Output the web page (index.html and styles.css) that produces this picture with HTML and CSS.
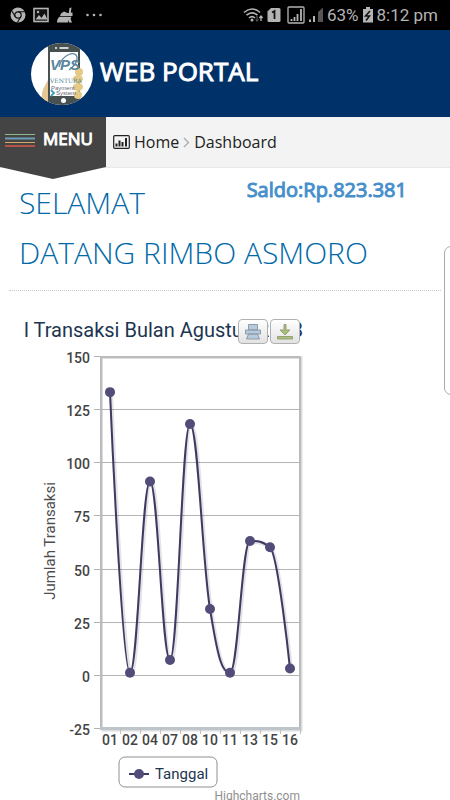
FILE: index.html
```html
<!DOCTYPE html>
<html lang="id">
  <head>
    <meta charset="UTF-8" />
    <meta name="viewport" content="width=device-width, initial-scale=1.0" />
    <title>Web Portal</title>
    <link rel="stylesheet" href="styles.css">
  </head>
  <body>
    <div class="status-bar">
      <div class="status-left">
        <svg width="16" height="16" viewBox="0 0 16 16">
          <circle cx="8" cy="8" r="7.5" fill="#b4b4b4" />
          <circle cx="8" cy="8" r="3.2" fill="#b4b4b4" stroke="#111" stroke-width="1.2" />
          <path d="M8 4.8H15M5.2 9.6L1.8 3.8M10.8 9.6L7.5 15.3" stroke="#111" stroke-width="1.1" />
        </svg>
        <svg width="16" height="16" viewBox="0 0 16 16">
          <rect x="1" y="1.5" width="14" height="13" fill="#111" stroke="#b4b4b4" stroke-width="1.6" />
          <path d="M2.5 12.5L6 8l2.5 3 3-4.5 3 6z" fill="#b4b4b4" />
          <circle cx="5" cy="5" r="1.2" fill="#b4b4b4" />
        </svg>
        <svg width="18" height="16" viewBox="0 0 18 16">
          <path d="M13.500 1l2-.5-1 7h-2zM5 6.500l3-2 3.500 1.500 5-.5V9H4zM3.500 9.800h12l-1 2 1.500 3.700h-3l-1-3v3H1c0-2 .5-4 2.500-5.700z" fill="#b4b4b4" />
        </svg>
        <svg class="dots" width="16" height="16" viewBox="0 0 16 16">
          <circle cx="1.500" cy="8" r="1.300" fill="#b4b4b4" />
          <circle cx="8" cy="8" r="1.300" fill="#b4b4b4" />
          <circle cx="14.500" cy="8" r="1.300" fill="#b4b4b4" />
        </svg>
      </div>
      <div class="status-right">
        <svg width="21" height="16" viewBox="0 0 21 16">
          <path d="M1 5.500q8-7 16 0M3.500 8.200q5.500-4.800 11 0M6 11q3-2.600 6 0" fill="none" stroke="#b4b4b4" stroke-width="1.600" />
          <circle cx="9" cy="13" r="1.500" fill="#b4b4b4" />
          <path d="M14 9v5M12.500 12.500L14 14.300l1.500-1.800" fill="none" stroke="#666" />
          <path d="M18 14V9M16.300 11L18 9l1.700 2" fill="none" stroke="#b4b4b4" stroke-width="1.300" />
        </svg>
        <svg width="14" height="16" viewBox="0 0 14 16">
          <path d="M4 1h8q1.500 0 1.500 1.500v11q0 1.500-1.500 1.500H2Q.5 15 .5 13.500V4.500z" fill="#b4b4b4" />
          <path d="M5 5.500L7.500 4v8" fill="none" stroke="#111" stroke-width="1.800" />
        </svg>
        <svg class="signal" width="18" height="18" viewBox="0 0 18 18">
          <rect x="1" y="1" width="16" height="16" rx="1" fill="none" stroke="#b4b4b4" stroke-width="1.300" />
          <path d="M4.500 15v-2M7.500 15v-4M10.500 15V8M14 15V3" stroke="#b4b4b4" stroke-width="1.800" />
        </svg>
        <svg width="16" height="16" viewBox="0 0 16 16">
          <path d="M10 5l5-4.500V15h-5z" fill="#555" />
          <path d="M2 15v-2.500M6 15V9" stroke="#b4b4b4" stroke-width="2" />
        </svg>
        <span class="battery-text">63%</span>
        <svg width="12" height="18" viewBox="0 0 12 18">
          <path d="M4 1h4v2h3v13.500H1V3h3z" fill="#b4b4b4" />
          <path d="M8 5L3.500 10h4L4 14.500" fill="none" stroke="#111" stroke-width="1.500" />
        </svg>
        <span class="clock">8:12 pm</span>
      </div>
    </div>

    <header class="header">
      <svg class="logo" width="64" height="64" viewBox="0 0 64 64">
        <clipPath id="logoClip"><circle cx="32" cy="32" r="31" /></clipPath>
        <g clip-path="url(#logoClip)">
          <rect width="64" height="64" fill="#fff" />
          <path d="M19 34c-2 9-8 12-7 22l9 8V34z" fill="#e5c694" />
          <rect x="18" y="1" width="32" height="68" rx="3" fill="#47514f" />
          <rect x="20" y="10" width="28" height="44" fill="#fff" />
          <path d="M30 6h8" stroke="#fff" stroke-width="1.500" stroke-linecap="round" />
          <circle cx="26" cy="6" r="1" fill="#fff" />
          <circle cx="33.500" cy="58.500" r="2.500" fill="#fff" />
          <g fill="#e5c987">
            <ellipse cx="49" cy="30" rx="4" ry="4" />
            <ellipse cx="48" cy="37" rx="5" ry="4" />
            <ellipse cx="48" cy="45" rx="5" ry="4" />
            <ellipse cx="48" cy="53" rx="4" ry="4" />
          </g>
          <path d="M29 25C32 12 46 8 47 15c1 6-4 10-8 13" fill="none" stroke="#5c86a0" stroke-width="1.300" />
          <text class="logo-vps" x="20" y="28">VPS</text>
          <text class="logo-ventura" x="20" y="41">VENTURA</text>
          <text class="logo-small" x="21" y="48">Payment</text>
          <text class="logo-small" x="26" y="53">System</text>
          <path d="M21 48l3 3-3 3" fill="none" stroke="#3ca0bd" stroke-width="1.800" />
        </g>
      </svg>
      <span class="brand">WEB PORTAL</span>
    </header>

    <nav class="nav">
      <button class="menu-btn" type="button">
        <svg width="30" height="15" viewBox="0 0 30 15">
          <path d="M0 1.500h30" stroke="#8fb98a" />
          <path d="M0 5.500h30" stroke="#6d9db5" stroke-width="2" />
          <path d="M0 9.500h30" stroke="#d3a765" />
          <path d="M0 13h30" stroke="#b45348" stroke-width="2" />
        </svg>
        <span>MENU</span>
      </button>
      <div class="breadcrumb">
        <svg width="17" height="14" viewBox="0 0 17 14">
          <rect x=".7" y=".7" width="15.600" height="12.600" rx="1" fill="none" stroke="#222" stroke-width="1.200" />
          <path d="M3.500 11.500V8.500M6.500 11.500V5.500M9.500 11.500V7M13 11.500V3" stroke="#222" stroke-width="2" />
        </svg>
        <a href="#">Home</a>
        <svg class="arrow" width="7" height="12" viewBox="0 0 7 12">
          <path d="M1 2l4.500 4.500L1 11" fill="none" stroke="#aaa" stroke-width="1.300" />
        </svg>
        <a href="#">Dashboard</a>
      </div>
    </nav>

    <main class="content">
      <div class="saldo">Saldo:Rp.823.381</div>
      <h1 class="welcome">SELAMAT DATANG RIMBO ASMORO</h1>
      <div class="side-card"></div>

      <div class="chart">
        <svg id="chart" width="300" height="490" viewBox="0 0 300 490">
          <text class="chart-title" x="14" y="27">l Transaksi Bulan Agustus 2018</text>
          <text class="axis-title" transform="translate(45 231) rotate(-90)">Jumlah Transaksi</text>
          <g id="grid"></g>
          <g id="series"></g>
          <rect x="109" y="447" width="98" height="30" rx="6" fill="#fff" stroke="#909090" />
          <path d="M119 464h20" stroke="#3e3a61" stroke-width="2" />
          <circle cx="129" cy="464" r="5" fill="#514c78" />
          <text class="legend" x="145" y="469">Tanggal</text>
          <text class="credits" x="290" y="490">Highcharts.com</text>
        </svg>
        <div class="chart-buttons">
          <button type="button" aria-label="Print">
            <svg width="18" height="18" viewBox="0 0 18 18">
              <path d="M4.500 7V1.500h9V7zM1.500 7h15v4h-15zM4.500 11h9l2 5h-13z" fill="#b5c9df" stroke="#8f9ba5" />
            </svg>
          </button>
          <button type="button" aria-label="Download">
            <svg width="18" height="18" viewBox="0 0 18 18">
              <path d="M8 1.500h2V7h4l-5 5-5-5h4zM1.500 13.500h15v2.500h-15z" fill="#a8bf77" stroke="#96a176" />
            </svg>
          </button>
        </div>
      </div>
    </main>

    <script src="chart.js"></script>
  </body>
</html>
```

FILE: styles.css
```css
body {
  margin: 0;
  background-color: #fff;
  font-family: "Open Sans", "Noto Sans", sans-serif;
  overflow-x: hidden;
}
svg {
  display: block;
  flex-shrink: 0;
}
button {
  font-family: inherit;
  cursor: pointer;
}

/* status bar */
.status-bar {
  display: flex;
  justify-content: space-between;
  align-items: center;
  height: 30px;
  padding: 0 12px 0 10px;
  background-color: #000;
  color: #b4b4b4;
  font-family: Roboto, sans-serif;
  font-size: 17px;
}
.status-left {
  display: flex;
  align-items: center;
  gap: 7px;
}
.status-left .dots {
  margin-left: 5px;
}
.status-right {
  display: flex;
  align-items: center;
  gap: 3px;
}
.status-right .signal {
  margin-left: 3px;
}

/* header */
.header {
  display: flex;
  align-items: center;
  gap: 6px;
  height: 87px;
  padding-left: 30px;
  background-color: #003168;
}
.brand {
  color: #fff;
  font-size: 26px;
  -webkit-text-stroke: 1px #fff;
  line-height: 30px;
  padding-bottom: 6px;
}
.logo-vps {
  font: italic bold 15px "Liberation Sans", sans-serif;
  fill: #5c86a0;
}
.logo-ventura {
  font: 6px "DejaVu Serif", serif;
  fill: #4d8093;
}
.logo-small {
  font: 6px "Liberation Sans", sans-serif;
  fill: #667;
}

/* menu and breadcrumb */
.nav {
  display: flex;
  align-items: flex-start;
  height: 51px;
  background-color: #f3f3f3;
  border-bottom: 1px solid #e8e8e8;
  box-sizing: border-box;
}
.menu-btn {
  display: flex;
  align-items: flex-start;
  gap: 8px;
  width: 106px;
  height: 62px;
  padding: 12px 0 0 5px;
  border: none;
  background-color: #444;
  color: #fff;
  font-size: 17px;
  -webkit-text-stroke: 1px #fff;
  line-height: 20px;
  clip-path: polygon(0 0, 100% 0, 100% 50px, 50% 100%, 0 50px);
}
.menu-btn svg {
  margin-top: 4px;
}
.breadcrumb {
  display: flex;
  align-items: center;
  gap: 4px;
  height: 50px;
  padding-left: 7px;
  font-size: 16px;
}
.breadcrumb a {
  color: #222;
  text-decoration: none;
}

/* content */
.content {
  position: relative;
  overflow: hidden;
  padding: 0 9px;
}
.saldo {
  float: right;
  margin: 8px 34px 0 0;
  color: #478fca;
  font-size: 20px;
  -webkit-text-stroke: 1px #478fca;
  line-height: 28px;
}
.welcome {
  margin: 0;
  padding: 10px 50px 12px 10px;
  border-bottom: 1px dotted #ccc;
  color: #0069a8;
  font-size: 30px;
  font-weight: 300;
  line-height: 50px;
}
.side-card {
  position: absolute;
  top: 78px;
  right: -14px;
  width: 18px;
  height: 147px;
  border: 1px solid #aaa;
  border-radius: 7px;
  background-color: #fff;
}

/* chart */
.chart {
  position: relative;
  width: 300px;
  margin: 19px 0 0 1px;
  font-family: Roboto, sans-serif;
}
.chart-title {
  font-size: 20px;
  fill: #1c3550;
}
.axis-title {
  font-size: 15px;
  fill: #4d4d4d;
  text-anchor: middle;
}
.y-label {
  font-size: 14px;
  font-weight: 500;
  fill: #444;
  text-anchor: end;
}
.x-label {
  font-size: 14px;
  font-weight: 500;
  fill: #444;
  text-anchor: middle;
}
.legend {
  font-size: 15px;
  fill: #1c3550;
}
.credits {
  font-size: 12px;
  fill: #909090;
  text-anchor: end;
}
.line {
  fill: none;
  stroke: #3e3a61;
  stroke-width: 2;
}
.line-shadow {
  fill: none;
  stroke: #3e3a61;
  stroke-opacity: 0.15;
  stroke-width: 4;
}
.chart-buttons {
  position: absolute;
  top: 9px;
  right: 10px;
  display: flex;
  gap: 2px;
}
.chart-buttons button {
  display: flex;
  align-items: center;
  justify-content: center;
  width: 30px;
  height: 25px;
  padding: 0;
  border: 1px solid #b0b0b0;
  border-radius: 4px;
  background: linear-gradient(#fff, #e2e2e2);
}
```

FILE: chart.js
```js
const labels = ["01", "02", "04", "07", "08", "10", "11", "13", "15", "16"];
const values = [133, 1, 91, 7, 118, 31, 1, 63, 60, 3];

const left = 90;
const right = 290;
const top_ = 46;
const bottom = 418;
const step = (right - left) / labels.length;

function toY(value) {
  return bottom - ((value + 25) * (bottom - top_)) / 175;
}

// grid lines and y labels
let grid = "";
for (let v = 150; v >= -25; v -= 25) {
  const y = Math.round(toY(v));
  grid += `<path d="M${left - 6} ${y}.5H${right}" stroke="#b4b4b4" />`;
  grid += `<text class="y-label" x="80" y="${y + 7}">${v}</text>`;
}

// plot border with its shadow
grid += `<rect x="93" y="48" width="198" height="372" fill="none" stroke="#ddd" stroke-width="3" />`;
grid += `<rect x="93" y="49" width="196" height="369" fill="#fff" />`;
for (let v = 125; v >= 0; v -= 25) {
  grid += `<path d="M${left} ${Math.round(toY(v))}.5H${right}" stroke="#b4b4b4" />`;
}
grid += `<rect x="91" y="47" width="199" height="371" fill="none" stroke="#b9bbbd" stroke-width="2" />`;
grid += `<path d="M90 418.5H291" stroke="#bdc5ca" stroke-width="3" />`;

// x labels
labels.forEach((label, i) => {
  const x = left + step * i;
  grid += `<path d="M${x + step}.5 418V424" stroke="#c0c0c0" />`;
  grid += `<text class="x-label" x="${x + step / 2}" y="435">${label}</text>`;
});
document.getElementById("grid").innerHTML = grid;

// spline through the points
const points = values.map((v, i) => ({
  x: left + step * (i + 0.5),
  y: toY(v),
}));
let path = `M${points[0].x} ${points[0].y}`;
let cx = points[0].x;
let cy = points[0].y;

for (let i = 1; i < points.length; i++) {
  const { x, y } = points[i];
  const last = points[i - 1];
  const next = points[i + 1];
  let lx = x;
  let ly = y;
  let rx = x;
  let ry = y;
  if (next) {
    lx = (1.5 * x + last.x) / 2.5;
    ly = (1.5 * y + last.y) / 2.5;
    rx = (1.5 * x + next.x) / 2.5;
    ry = (1.5 * y + next.y) / 2.5;
    const correction = ((ry - ly) * (rx - x)) / (rx - lx) + y - ry;
    ly += correction;
    ry += correction;

    // keep the curve between neighbouring values
    const lastMax = Math.max(last.y, y);
    const lastMin = Math.min(last.y, y);
    if (ly > lastMax || ly < lastMin) {
      ly = ly > lastMax ? lastMax : lastMin;
      ry = 2 * y - ly;
    }
    const nextMax = Math.max(next.y, y);
    const nextMin = Math.min(next.y, y);
    if (ry > nextMax || ry < nextMin) {
      ry = ry > nextMax ? nextMax : nextMin;
      ly = 2 * y - ry;
    }
  }
  path += `C${cx} ${cy} ${lx} ${ly} ${x} ${y}`;
  cx = rx;
  cy = ry;
}

let series = `<path class="line-shadow" transform="translate(1 1)" d="${path}" />`;
series += `<path class="line" d="${path}" />`;
points.forEach((p) => {
  series += `<circle cx="${p.x}" cy="${p.y}" r="5" fill="#514c78" />`;
});
document.getElementById("series").innerHTML = series;
```
